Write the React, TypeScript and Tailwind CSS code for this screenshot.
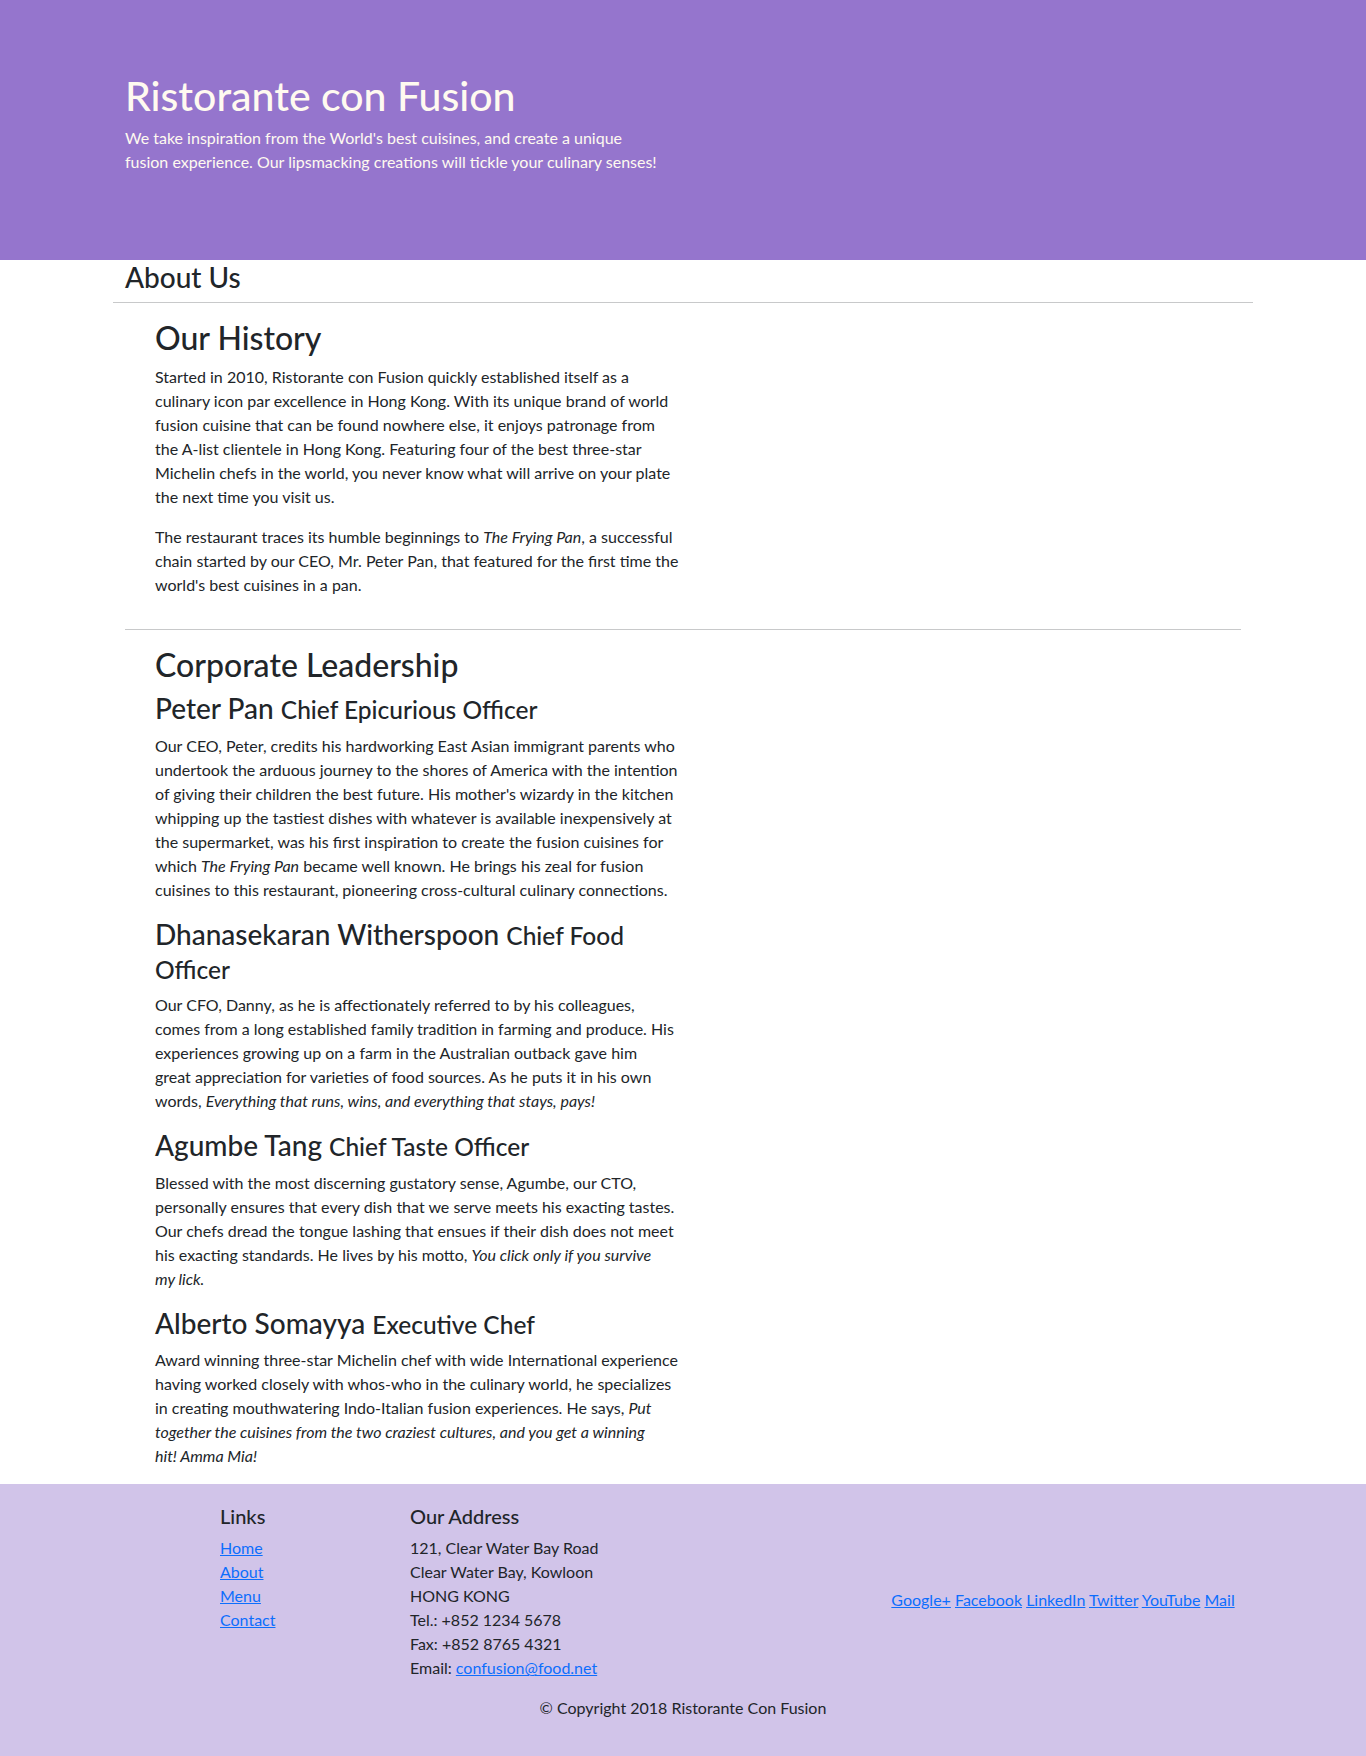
import React from "react";

const Leader = ({
  name,
  title,
  children,
}: {
  name: string;
  title: React.ReactNode;
  children: React.ReactNode;
}) => (
  <>
    <h3 className="text-[28px] leading-[1.2] font-medium mb-2">
      {name} <small className="text-[0.875em]">{title}</small>
    </h3>
    <p className="mb-4">{children}</p>
  </>
);

const FooterLink = ({ children }: { children: React.ReactNode }) => (
  <a href="#" className="text-[#0d6efd] underline">
    {children}
  </a>
);

export default function App() {
  return (
    <div className="min-h-screen bg-white text-[#212529] text-base leading-6 font-['Lato',sans-serif]">
      {/* Jumbotron */}
      <header className="h-[260px] bg-[#9575cd] text-[#fffaf0]">
        <div className="w-[1140px] mx-auto px-3 pt-[72px]">
          <h1 className="text-[41px] leading-[48px] font-medium mb-[6px]">Ristorante con Fusion</h1>
          <p className="w-[560px]">
            We take inspiration from the World's best cuisines, and create a unique
            <br />
            fusion experience. Our lipsmacking creations will tickle your culinary senses!
          </p>
        </div>
      </header>

      <main className="w-[1140px] mx-auto">
        <h3 className="px-3 pt-px text-[28px] leading-[1.2] font-medium mb-[7px]">About Us</h3>
        <hr className="border-0 border-t border-[#c8c9ca]" />

        <div className="px-3">
          {/* History */}
          <div className="pl-[30px] w-[590px]">
            <h2 className="mt-4 text-[32px] leading-[1.2] font-medium mb-2">Our History</h2>
            <p className="mb-4">
              Started in 2010, Ristorante con Fusion quickly established itself as a<br />
              culinary icon par excellence in Hong Kong. With its unique brand of world<br />
              fusion cuisine that can be found nowhere else, it enjoys patronage from<br />
              the A-list clientele in Hong Kong. Featuring four of the best three-star<br />
              Michelin chefs in the world, you never know what will arrive on your plate<br />
              the next time you visit us.
            </p>
            <p className="mb-4">
              The restaurant traces its humble beginnings to <em>The Frying Pan</em>, a successful
              <br />
              chain started by our CEO, Mr. Peter Pan, that featured for the first time the<br />
              world's best cuisines in a pan.
            </p>
          </div>

          <hr className="mt-8 mb-4 border-0 border-t border-[#c8c9ca]" />

          {/* Leadership */}
          <div className="pl-[30px] w-[590px]">
            <h2 className="text-[32px] leading-[1.2] font-medium mb-2">Corporate Leadership</h2>
            <Leader name="Peter Pan" title="Chief Epicurious Officer">
              Our CEO, Peter, credits his hardworking East Asian immigrant parents who<br />
              undertook the arduous journey to the shores of America with the intention<br />
              of giving their children the best future. His mother's wizardy in the kitchen<br />
              whipping up the tastiest dishes with whatever is available inexpensively at<br />
              the supermarket, was his first inspiration to create the fusion cuisines for<br />
              which <em>The Frying Pan</em> became well known. He brings his zeal for fusion<br />
              cuisines to this restaurant, pioneering cross-cultural culinary connections.
            </Leader>
            <Leader
              name="Dhanasekaran Witherspoon"
              title={
                <>
                  Chief Food
                  <br />
                  Officer
                </>
              }
            >
              Our CFO, Danny, as he is affectionately referred to by his colleagues,<br />
              comes from a long established family tradition in farming and produce. His<br />
              experiences growing up on a farm in the Australian outback gave him<br />
              great appreciation for varieties of food sources. As he puts it in his own<br />
              words, <em>Everything that runs, wins, and everything that stays, pays!</em>
            </Leader>
            <Leader name="Agumbe Tang" title="Chief Taste Officer">
              Blessed with the most discerning gustatory sense, Agumbe, our CTO,<br />
              personally ensures that every dish that we serve meets his exacting tastes.<br />
              Our chefs dread the tongue lashing that ensues if their dish does not meet<br />
              his exacting standards. He lives by his motto, <em>You click only if you survive</em>
              <br />
              <em>my lick.</em>
            </Leader>
            <Leader name="Alberto Somayya" title="Executive Chef">
              Award winning three-star Michelin chef with wide International experience<br />
              having worked closely with whos-who in the culinary world, he specializes<br />
              in creating mouthwatering Indo-Italian fusion experiences. He says, <em>Put</em>
              <br />
              <em>
                together the cuisines from the two craziest cultures, and you get a winning
                <br />
                hit! Amma Mia!
              </em>
            </Leader>
          </div>
        </div>
      </main>

      {/* Footer */}
      <footer className="bg-[#d1c4e9] py-5">
        <div className="w-[1140px] mx-auto">
          <div className="flex">
            <div className="ml-[95px] w-[190px] px-3">
              <h5 className="text-xl leading-6 font-medium mb-2">Links</h5>
              <ul className="mb-4">
                <li><FooterLink>Home</FooterLink></li>
                <li><FooterLink>About</FooterLink></li>
                <li><FooterLink>Menu</FooterLink></li>
                <li><FooterLink>Contact</FooterLink></li>
              </ul>
            </div>
            <div className="w-[475px] px-3">
              <h5 className="text-xl leading-6 font-medium mb-2">Our Address</h5>
              <address className="not-italic mb-4">
                121, Clear Water Bay Road<br />
                Clear Water Bay, Kowloon<br />
                HONG KONG<br />
                Tel.: +852 1234 5678<br />
                Fax: +852 8765 4321<br />
                Email: <FooterLink>confusion@food.net</FooterLink>
              </address>
            </div>
            <div className="w-[380px] px-3 self-center text-center">
              <FooterLink>Google+</FooterLink> <FooterLink>Facebook</FooterLink>{" "}
              <FooterLink>LinkedIn</FooterLink> <FooterLink>Twitter</FooterLink>{" "}
              <FooterLink>YouTube</FooterLink> <FooterLink>Mail</FooterLink>
            </div>
          </div>
          <div className="flex justify-center">
            <p className="mb-4">© Copyright 2018 Ristorante Con Fusion</p>
          </div>
        </div>
      </footer>
    </div>
  );
}
